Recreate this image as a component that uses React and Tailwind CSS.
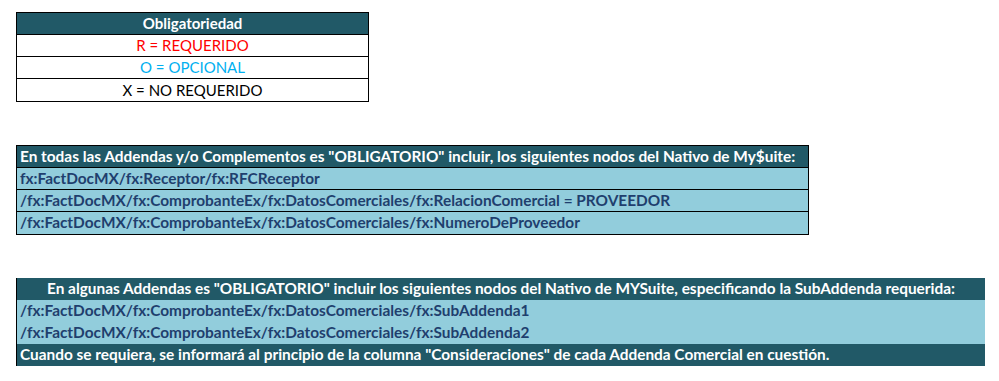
// Obligatoriedad / nodos del Nativo de MySuite
const font = "font-['Lato','Open_Sans',sans-serif]";

function Row({ className = "", children }) {
  return (
    <div className={`h-[22px] flex items-center px-[3px] whitespace-nowrap ${className}`}>
      {children}
    </div>
  );
}

export default function App() {
  return (
    <div className={`w-[999px] h-[381px] bg-white ${font} text-[15px] leading-none`}>
      <div className="pt-[12px] pl-[16px]">
        {/* Leyenda */}
        <div className="w-[353px] border border-black">
          <Row className="justify-center bg-[#215967] text-white font-bold border-b border-black">
            Obligatoriedad
          </Row>
          <Row className="justify-center text-[#ff0000] border-b border-black">R = REQUERIDO</Row>
          <Row className="justify-center text-[#00b0f0] border-b border-black">O = OPCIONAL</Row>
          <Row className="justify-center text-black h-[21px]">X = NO REQUERIDO</Row>
        </div>

        {/* Todas las addendas */}
        <div className="mt-[43px] w-[793px] border border-black font-bold text-[15.4px]">
          <Row className="bg-[#215967] text-white border-b border-black">
            En todas las Addendas y/o Complementos es "OBLIGATORIO" incluir, los siguientes nodos del Nativo de My$uite:
          </Row>
          <Row className="bg-[#92cddc] text-[#1f3f6e] border-b border-black">
            fx:FactDocMX/fx:Receptor/fx:RFCReceptor
          </Row>
          <Row className="bg-[#92cddc] text-[#1f3f6e] border-b border-black">
            /fx:FactDocMX/fx:ComprobanteEx/fx:DatosComerciales/fx:RelacionComercial = PROVEEDOR
          </Row>
          <Row className="bg-[#92cddc] text-[#1f3f6e] h-[21px]">
            /fx:FactDocMX/fx:ComprobanteEx/fx:DatosComerciales/fx:NumeroDeProveedor
          </Row>
        </div>

        {/* Algunas addendas */}
        <div className="mt-[43px] w-[969px] border-l border-black font-bold text-[15.4px]">
          <Row className="justify-center bg-[#215967] text-white">
            En algunas Addendas es "OBLIGATORIO" incluir los siguientes nodos del Nativo de MYSuite, especificando la SubAddenda requerida:
          </Row>
          <Row className="bg-[#92cddc] text-[#1f3f6e]">
            /fx:FactDocMX/fx:ComprobanteEx/fx:DatosComerciales/fx:SubAddenda1
          </Row>
          <Row className="bg-[#92cddc] text-[#1f3f6e]">
            /fx:FactDocMX/fx:ComprobanteEx/fx:DatosComerciales/fx:SubAddenda2
          </Row>
          <Row className="bg-[#215967] text-white">
            Cuando se requiera, se informará al principio de la columna "Consideraciones" de cada Addenda Comercial en cuestión.
          </Row>
        </div>
      </div>
    </div>
  );
}
